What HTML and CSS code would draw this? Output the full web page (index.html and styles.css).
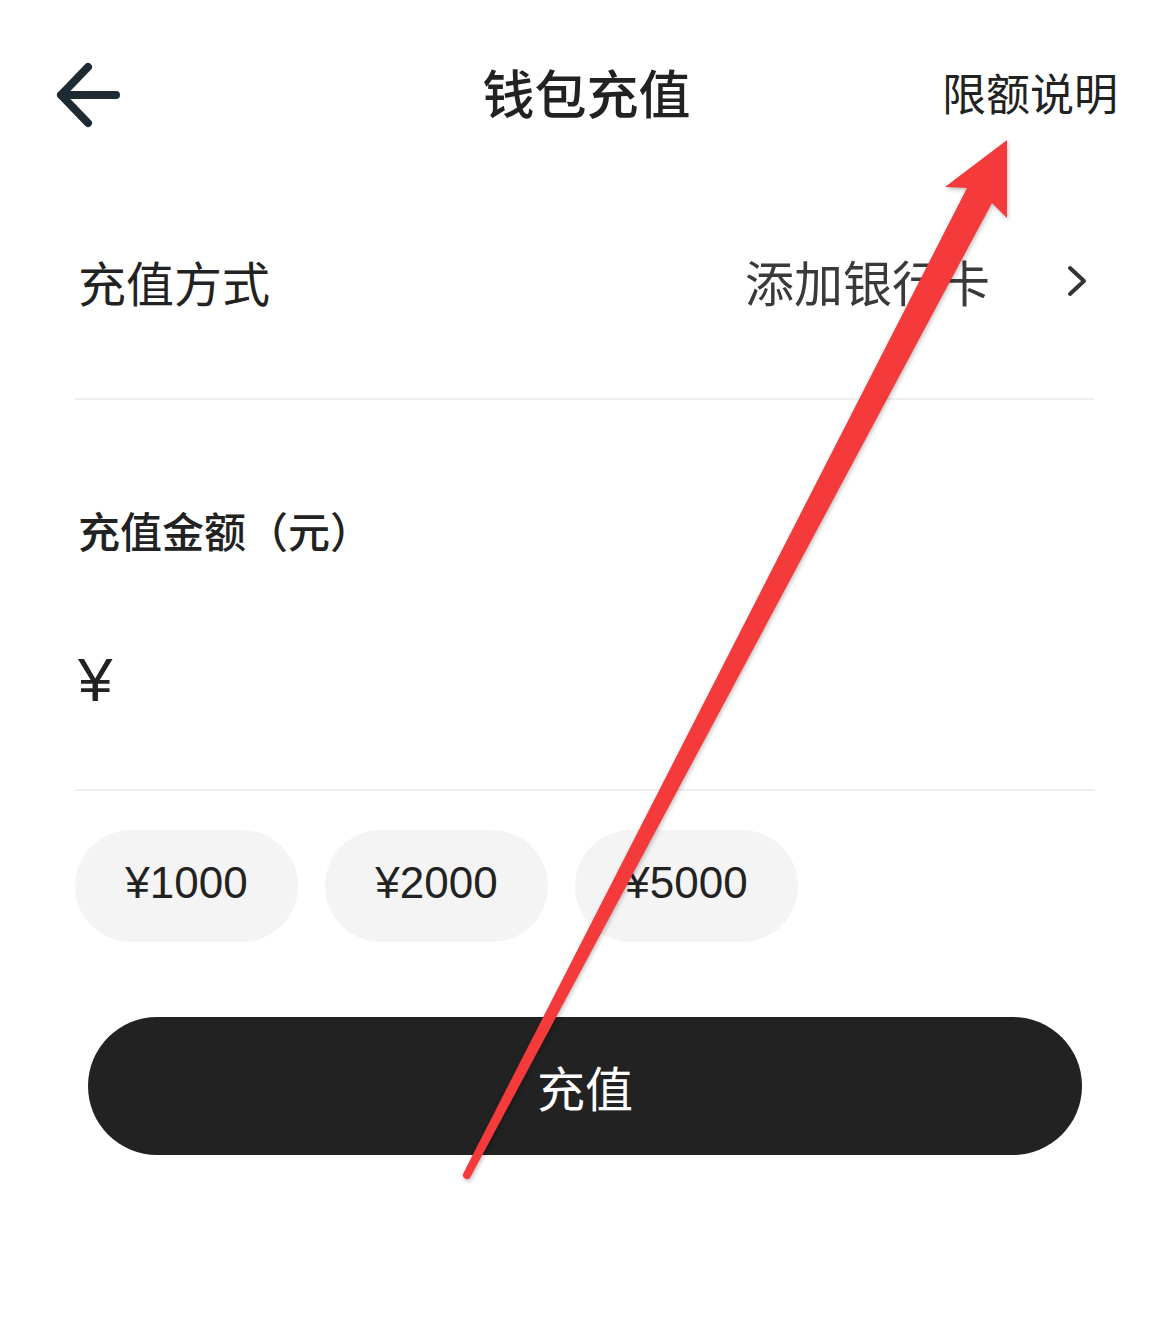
FILE: index.html
```html
<!DOCTYPE html>
<html lang="zh-CN">
<head>
    <meta charset="UTF-8" />
    <meta name="viewport" content="width=device-width, initial-scale=1.0" />
    <title>钱包充值</title>
    <link rel="stylesheet" href="styles.css">
</head>
<body>
<div class="page">
    <header class="header">
        <a class="back" href="#">
            <svg width="66" height="66" viewBox="0 0 66 66">
                <path d="M6 33 H61 M33 5 L6 33 L33 61" fill="none" stroke="#1e2b33" stroke-width="8" stroke-linecap="round" stroke-linejoin="round"/>
            </svg>
        </a>
        <h1 class="title">钱包充值</h1>
        <a class="limit" href="#">限额说明</a>
    </header>

    <div class="container">
        <div class="row method">
            <span class="label">充值方式</span>
            <span class="value">
                添加银行卡
                <svg class="chevron" width="22" height="34" viewBox="0 0 22 34">
                    <path d="M4 4 L18 17 L4 30" fill="none" stroke="#333" stroke-width="4" stroke-linecap="round" stroke-linejoin="round"/>
                </svg>
            </span>
        </div>

        <div class="amount">
            <div class="amount-label">充值金额（元）</div>
            <div class="amount-input">¥</div>
        </div>

        <div class="chips">
            <button class="chip">¥1000</button>
            <button class="chip">¥2000</button>
            <button class="chip">¥5000</button>
        </div>
    </div>

    <div class="submit-wrap">
        <button class="submit">充值</button>
    </div>

    <!-- annotation arrow drawn over the screenshot -->
    <svg class="annotation" width="1170" height="1320" viewBox="0 0 1170 1320">
        <path d="M463.5 1173 L967 188 L945 187 L1007 140 L1007 218 L992 203 L470.5 1177 A4 4 0 0 1 463.5 1173 Z" fill="#f43a3a"/>
    </svg>
</div>
</body>
</html>
```

FILE: styles.css
```css
* {
    box-sizing: border-box;
}

body {
    margin: 0;
    background: #fff;
    color: #222;
    font-family: "Noto Sans CJK SC", "Noto Sans", sans-serif;
}

.page {
    position: relative;
    width: 1170px;
    height: 1320px;
    overflow: hidden;
}

/* Top bar */
.header {
    display: grid;
    grid-template-columns: 1fr auto 1fr;
    align-items: center;
    height: 190px;
    padding: 0 52px 0 55px;
}

.back {
    display: flex;
    width: 66px;
    height: 66px;
}

.title {
    margin: 0 0 6px;
    font-size: 52px;
    font-weight: 500;
    line-height: 70px;
    color: #222;
}

.limit {
    justify-self: end;
    margin-bottom: 6px;
    font-size: 44px;
    line-height: 60px;
    color: #222;
    text-decoration: none;
}

.container {
    margin: 0 75px;
}

/* Payment method row */
.row {
    display: flex;
    justify-content: space-between;
    align-items: center;
    height: 210px;
    padding: 0 7px 26px 3px;
    border-bottom: 2px solid #efefef;
}

.label {
    font-size: 48px;
    line-height: 64px;
}

.value {
    display: flex;
    align-items: center;
    gap: 76px;
    font-size: 49px;
    line-height: 64px;
    color: #3a3a3a;
}

.chevron {
    display: block;
}

/* Amount input */
.amount {
    padding: 100px 0 74px 3px;
    border-bottom: 2px solid #efefef;
}

.amount-label {
    font-size: 42px;
    font-weight: 500;
    line-height: 60px;
}

.amount-input {
    margin-top: 85px;
    height: 70px;
    font-family: "Liberation Sans", sans-serif;
    font-size: 62px;
    line-height: 70px;
}

/* Quick amounts */
.chips {
    display: flex;
    gap: 27px;
    margin-top: 39px;
}

.chip {
    width: 223px;
    height: 112px;
    padding: 0 0 6px;
    border: none;
    border-radius: 56px;
    background: #f4f4f4;
    color: #222;
    font-family: "Liberation Sans", sans-serif;
    font-size: 44px;
    cursor: pointer;
}

/* Submit */
.submit-wrap {
    padding: 0 88px;
    margin-top: 75px;
}

.submit {
    width: 100%;
    height: 138px;
    border: none;
    border-radius: 69px;
    background: #222;
    color: #fff;
    font-family: "Noto Sans CJK SC", sans-serif;
    font-size: 48px;
    cursor: pointer;
}

.annotation {
    position: absolute;
    top: 0;
    left: 0;
    pointer-events: none;
    filter: drop-shadow(1px 2px 2px rgba(0, 0, 0, 0.25));
}
```
